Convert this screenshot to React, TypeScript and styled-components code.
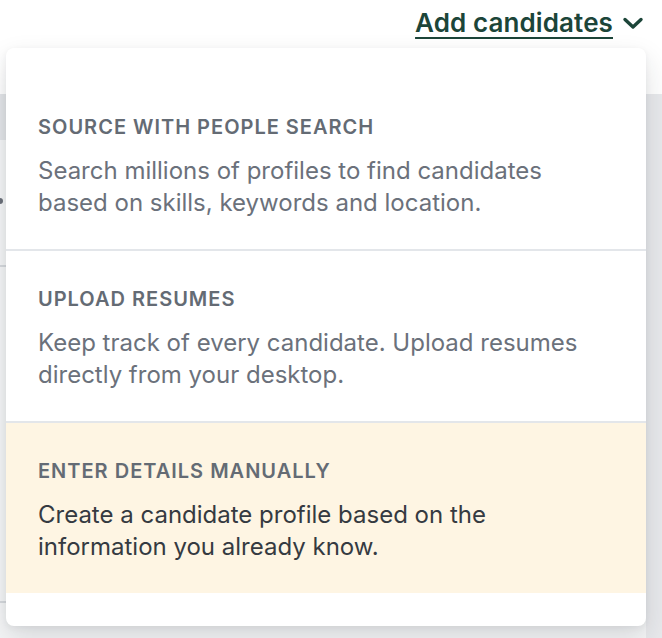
import styled, { createGlobalStyle } from "styled-components";

const GlobalStyle = createGlobalStyle`
  html, body {
    margin: 0;
    padding: 0;
    background: #ffffff;
    font-family: Inter, "Noto Sans", "Liberation Sans", sans-serif;
    -webkit-font-smoothing: antialiased;
  }
  * { box-sizing: border-box; }
`;

type OptionType = {
  title: string
  lines: string[]
  active?: boolean
}

const options: OptionType[] = [
  {
    title: "Source with people search",
    lines: ["Search millions of profiles to find candidates", "based on skills, keywords and location."],
  },
  {
    title: "Upload resumes",
    lines: ["Keep track of every candidate. Upload resumes", "directly from your desktop."],
  },
  {
    title: "Enter details manually",
    lines: ["Create a candidate profile based on the", "information you already know."],
    active: true,
  },
];

const Option = (props: OptionType) => {
  return (
    <StyledOption $active={props.active}>
      <OptionTitle>{props.title}</OptionTitle>
      <OptionText $active={props.active}>
        {props.lines.map((line, i) => (
          <span key={i}>
            {line}
            {i < props.lines.length - 1 && <br />}
          </span>
        ))}
      </OptionText>
    </StyledOption>
  );
};

export const App = () => {
  return (
    <Page>
      <GlobalStyle />
      <Header>
        <Trigger href={"#"}>
          <TriggerLabel>Add candidates</TriggerLabel>
          <svg width="22" height="14" viewBox="0 0 22 14" fill="none">
            <path d="M3 3.5 L11 11 L19 3.5" stroke="#1c4539" strokeWidth="3.4" strokeLinecap="round" strokeLinejoin="round" />
          </svg>
        </Trigger>
      </Header>
      <Body>
        <Main>
          <Toolbar />
          <Row $height={127}>
            <Dot />
          </Row>
          <Row $height={336} />
        </Main>
        <Aside />
      </Body>

      <Menu>
        {options.map((o) => (
          <Option key={o.title} {...o} />
        ))}
      </Menu>
    </Page>
  );
};

export default App;

const Page = styled.div`
  position: relative;
  width: 662px;
  height: 638px;
  overflow: hidden;
  display: flex;
  flex-direction: column;
`

const Header = styled.header`
  height: 94px;
  display: flex;
  justify-content: flex-end;
  align-items: flex-start;
  padding: 5px 18px 0 0;
  background: #ffffff;
`

const Trigger = styled.a`
  display: flex;
  align-items: center;
  gap: 9px;
  color: #1c4539;
  text-decoration: none;
`

const TriggerLabel = styled.span`
  font-size: 26px;
  font-weight: 600;
  line-height: 36px;
  letter-spacing: 0.1px;
  text-decoration: underline;
  text-decoration-thickness: 2px;
  text-underline-offset: 5px;
`

const Body = styled.div`
  flex: 1;
  display: flex;
`

const Main = styled.div`
  flex: 1;
  display: flex;
  flex-direction: column;
  background: #f5f6f7;
`

const Toolbar = styled.div`
  height: 46px;
  background: #e3e5e8;
`

const Row = styled.div<{ $height: number }>`
  position: relative;
  height: ${(p) => p.$height}px;
  border-bottom: 2px solid #d6d9dd;
`

const Dot = styled.span`
  position: absolute;
  left: -3px;
  top: 58px;
  width: 6px;
  height: 6px;
  border-radius: 50%;
  background: #6b7079;
`

const Aside = styled.div`
  width: 16px;
  background: #e8e9ec;
`

const Menu = styled.div`
  position: absolute;
  top: 48px;
  left: 6px;
  width: 640px;
  padding: 31px 0 33px;
  background: #ffffff;
  border-radius: 8px;
  box-shadow: 0 12px 28px rgba(30, 35, 45, 0.14), 0 2px 6px rgba(30, 35, 45, 0.06);
`

const StyledOption = styled.div<{ $active?: boolean }>`
  padding: 36px 32px 30px;
  background: ${(p) => (p.$active ? "#fef5e3" : "#ffffff")};
  border-bottom: 2px solid #e3e6ea;

  &:last-child {
    border-bottom: none;
  }
`

const OptionTitle = styled.h3`
  margin: 0 0 16px;
  font-size: 20px;
  line-height: 24px;
  font-weight: 600;
  letter-spacing: 1px;
  text-transform: uppercase;
  color: #646b74;
`

const OptionText = styled.p<{ $active?: boolean }>`
  margin: 0;
  font-size: 24px;
  line-height: 32px;
  font-weight: 400;
  color: ${(p) => (p.$active ? "#353a41" : "#6b717b")};
`
